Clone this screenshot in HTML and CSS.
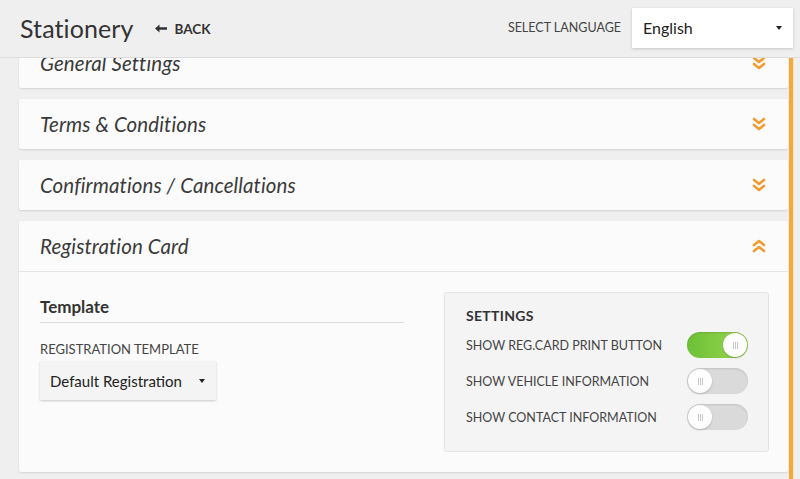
FILE: index.html
```html
<!DOCTYPE html>
<html>
<head>
<meta charset="utf-8">
<link rel="stylesheet" href="styles.css">
</head>
<body>
<header class="topbar">
  <div class="title-group">
    <h1 class="page-title">Stationery</h1>
    <a class="back-link"><svg class="back-arrow" viewBox="0 0 12 9" width="12" height="9"><path d="M0 4.5 L4.5 0.5 L4.5 3.3 L12 3.3 L12 5.7 L4.5 5.7 L4.5 8.5 Z" fill="#333"/></svg>BACK</a>
  </div>
  <div class="lang-group">
    <span class="lang-label">SELECT LANGUAGE</span>
    <div class="lang-select"><span>English</span><span class="caret"></span></div>
  </div>
</header>
<main class="viewport">
  <div class="panels">
    <section class="panel panel-first">
      <div class="panel-head"><span class="panel-title">General Settings</span>
        <svg class="chev" viewBox="0 0 14 14" width="14" height="14"><path d="M2 2 L7 6 L12 2 M2 8 L7 12 L12 8" fill="none" stroke="#f29b30" stroke-width="2.6" stroke-linecap="round" stroke-linejoin="round"/></svg>
      </div>
    </section>
    <section class="panel">
      <div class="panel-head"><span class="panel-title">Terms &amp; Conditions</span>
        <svg class="chev" viewBox="0 0 14 14" width="14" height="14"><path d="M2 2 L7 6 L12 2 M2 8 L7 12 L12 8" fill="none" stroke="#f29b30" stroke-width="2.6" stroke-linecap="round" stroke-linejoin="round"/></svg>
      </div>
    </section>
    <section class="panel">
      <div class="panel-head"><span class="panel-title">Confirmations / Cancellations</span>
        <svg class="chev" viewBox="0 0 14 14" width="14" height="14"><path d="M2 2 L7 6 L12 2 M2 8 L7 12 L12 8" fill="none" stroke="#f29b30" stroke-width="2.6" stroke-linecap="round" stroke-linejoin="round"/></svg>
      </div>
    </section>
    <section class="panel panel-open">
      <div class="panel-head"><span class="panel-title">Registration Card</span>
        <svg class="chev" viewBox="0 0 14 14" width="14" height="14"><path d="M2 6 L7 2 L12 6 M2 12 L7 8 L12 12" fill="none" stroke="#f29b30" stroke-width="2.6" stroke-linecap="round" stroke-linejoin="round"/></svg>
      </div>
      <div class="panel-body">
        <div class="template-col">
          <h2 class="section-title">Template</h2>
          <div class="field-label">REGISTRATION TEMPLATE</div>
          <div class="tpl-select"><span>Default Registration</span><span class="caret"></span></div>
        </div>
        <div class="settings-box">
          <h3 class="settings-title">SETTINGS</h3>
          <div class="setting-row"><span>SHOW REG.CARD PRINT BUTTON</span><span class="toggle on"><span class="knob"><i></i></span></span></div>
          <div class="setting-row"><span>SHOW VEHICLE INFORMATION</span><span class="toggle"><span class="knob"><i></i></span></span></div>
          <div class="setting-row"><span>SHOW CONTACT INFORMATION</span><span class="toggle"><span class="knob"><i></i></span></span></div>
        </div>
      </div>
    </section>
  </div>
  <div class="scrollbar"></div>
</main>
</body>
</html>
```
FILE: styles.css
```css
* { box-sizing: border-box; }
html, body { margin: 0; padding: 0; }
body {
  width: 800px;
  height: 479px;
  overflow: hidden;
  background: #efefef;
  font-family: Lato, "Open Sans", sans-serif;
  color: #333;
}
.topbar {
  height: 58px;
  display: flex;
  align-items: center;
  justify-content: space-between;
  padding: 0 7px 2px 20px;
  border-bottom: 1px solid #dcdcdc;
  position: relative;
  z-index: 2;
  background: #efefef;
}
.title-group { display: flex; align-items: center; }
.page-title {
  margin: 0;
  font-size: 25px;
  font-weight: 400;
  color: #333;
  letter-spacing: 0.1px;
}
.back-link {
  margin-left: 21px;
  font-size: 13.5px;
  font-weight: 700;
  color: #333;
  display: flex;
  align-items: center;
  margin-top: 2px;
}
.back-arrow { margin-right: 8px; }
.lang-group { display: flex; align-items: center; }
.lang-label { font-size: 12.5px; color: #444; margin-right: 11px; }
.lang-select {
  width: 161px;
  height: 40px;
  background: #fff;
  box-shadow: 0 1px 3px rgba(0,0,0,0.18);
  display: flex;
  align-items: center;
  justify-content: space-between;
  padding: 0 11px 0 11px;
  font-size: 16px;
  color: #222;
}
.caret {
  width: 0; height: 0;
  border-left: 3.5px solid transparent;
  border-right: 3.5px solid transparent;
  border-top: 4px solid #222;
}
.viewport {
  height: 421px;
  overflow: hidden;
  display: flex;
  padding-left: 19px;
}
.panels { width: 769px; flex-shrink: 0; display: flex; flex-direction: column; gap: 11px; }
.scrollbar {
  width: 5px;
  flex-shrink: 0;
  margin-left: 1px;
  background: #f5a936;
  border-right: 1px solid #f1e2c8;
  height: 421px;
}
.panel {
  background: #fbfbfb;
  box-shadow: 0 1px 2px rgba(0,0,0,0.12);
  border-radius: 2px;
  flex-shrink: 0;
}
.panel-first { margin-top: -20px; }
.panel-head {
  height: 50px;
  display: flex;
  align-items: center;
  justify-content: space-between;
  padding: 0 22px 0 21px;
}
.panel-title {
  font-style: italic;
  font-size: 20.5px;
  color: #3a3a3a;
  letter-spacing: 0.1px;
}
.panel-open .panel-head { border-bottom: 1px solid #e6e6e6; height: 51px; }
.panel-body {
  display: flex;
  justify-content: space-between;
  padding: 20px 19px 20px 21px;
}
.template-col { width: 364px; }
.section-title {
  margin: 4px 0 0 0;
  font-size: 17px;
  font-weight: 700;
  color: #333;
  padding-bottom: 5px;
  border-bottom: 1px solid #dedede;
}
.field-label { margin-top: 18px; font-size: 13px; color: #444; }
.tpl-select {
  margin-top: 4px;
  width: 176px;
  height: 39px;
  background: #f4f4f4;
  box-shadow: 0 1px 2px rgba(0,0,0,0.2);
  display: flex;
  align-items: center;
  justify-content: space-between;
  padding: 0 11px 0 10px;
  font-size: 15px;
  color: #222;
}
.settings-box {
  width: 325px;
  height: 160px;
  background: #f4f4f4;
  border: 1px solid #e3e3e3;
  border-radius: 3px;
  padding: 14px 20px 0 21px;
}
.settings-title {
  margin: 0 0 3px 0;
  font-size: 14px;
  font-weight: 700;
  color: #333;
  letter-spacing: 0.3px;
}
.setting-row {
  height: 36px;
  display: flex;
  align-items: center;
  justify-content: space-between;
  font-size: 12.5px;
  color: #444;
}
.toggle {
  width: 61px;
  height: 26px;
  border-radius: 13px;
  background: #dadada;
  box-shadow: inset 0 1px 2px rgba(0,0,0,0.12);
  display: flex;
  align-items: center;
  padding: 1px;
}
.toggle.on {
  background: linear-gradient(90deg, #6cc137, #9cd54f);
  justify-content: flex-end;
}
.knob {
  width: 24px;
  height: 24px;
  border-radius: 50%;
  background: #fff;
  box-shadow: 0 1px 2px rgba(0,0,0,0.2);
  display: flex;
  align-items: center;
  justify-content: center;
}
.knob i {
  width: 5px;
  height: 7px;
  border-left: 1px solid #c8c8c8;
  border-right: 1px solid #c8c8c8;
  position: relative;
}
.knob i::after {
  content: "";
  position: absolute;
  left: 1px;
  top: 0;
  width: 1px;
  height: 7px;
  background: #c8c8c8;
}
```
